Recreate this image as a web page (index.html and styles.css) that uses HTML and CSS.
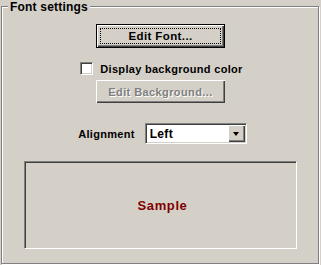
FILE: index.html
```html
<!DOCTYPE html>
<html lang="en">
<head>
    <meta charset="UTF-8">
    <title>Font settings</title>
    <link rel="stylesheet" href="styles.css">
</head>
<body>
    <div class="group">
        <span class="group-title">Font settings</span>

        <button class="btn btn-default"><span class="focus">Edit Font...</span></button>

        <label class="check-row">
            <span class="checkbox"></span>
            <span>Display background color</span>
        </label>

        <button class="btn btn-disabled" disabled>Edit Background...</button>

        <div class="align-row">
            <span class="align-label">Alignment</span>
            <div class="combo">
                <span class="combo-text">Left</span>
                <span class="combo-btn"><span class="arrow"></span></span>
            </div>
        </div>

        <div class="sample">Sample</div>
    </div>
</body>
</html>
```

FILE: styles.css
```css
body {
    margin: 0;
    width: 321px;
    height: 265px;
    background-color: #d4d0c8;
    font-family: "Liberation Sans", Arial, sans-serif;
    font-size: 11px;
    font-weight: bold;
    letter-spacing: 0.3px;
    color: #000;
}
.group {
    position: relative;
    box-sizing: border-box;
    margin: 6px 0 0 1px;
    width: 318px;
    height: 258px;
    border: 1px solid #808080;
    box-shadow: inset 1px 1px 0 #fff, 1px 1px 0 #fff;
    display: flex;
    flex-direction: column;
    align-items: center;
    padding-top: 17px;
}
.group-title {
    position: absolute;
    left: 6px;
    top: -6px;
    padding: 0 2px;
    background-color: #d4d0c8;
    font-size: 12px;
    line-height: 12px;
    letter-spacing: 0.2px;
}
.btn {
    box-sizing: border-box;
    width: 129px;
    font-family: inherit;
    font-size: 11px;
    font-weight: bold;
    letter-spacing: 0.4px;
    background-color: #d4d0c8;
    padding: 0;
    margin-left: 1px;
}
.btn-default {
    height: 24px;
    border: 1px solid #000;
    box-shadow: inset 1px 1px 0 #fff, inset -1px -1px 0 #404040, inset -2px -2px 0 #808080;
    display: flex;
}
.focus {
    flex: 1;
    margin: 3px;
    border: 1px dotted #000;
    line-height: 14px;
    text-align: center;
    font-size: 11.5px;
}
.check-row {
    display: flex;
    align-items: center;
    gap: 7px;
    margin-top: 14px;
    margin-left: 3px;
    height: 13px;
}
.checkbox {
    box-sizing: border-box;
    width: 13px;
    height: 13px;
    background-color: #fff;
    border: 1px solid;
    border-color: #808080 #fff #fff #808080;
    box-shadow: inset 1px 1px 0 #404040, inset -1px -1px 0 #d4d0c8;
}
.btn-disabled {
    height: 23px;
    margin-top: 5px;
    border: none;
    color: #808080;
    text-shadow: 1px 1px 0 #fff;
    box-shadow: inset 1px 1px 0 #fff, inset -1px -1px 0 #404040, inset -2px -2px 0 #808080;
}
.align-row {
    display: flex;
    align-items: center;
    gap: 10px;
    margin-top: 20px;
    margin-left: 5px;
}
.combo {
    box-sizing: border-box;
    width: 102px;
    height: 21px;
    background-color: #fff;
    border: 1px solid;
    border-color: #808080 #fff #fff #808080;
    box-shadow: inset 1px 1px 0 #404040, inset -1px -1px 0 #d4d0c8;
    display: flex;
    align-items: center;
    padding: 1px;
}
.combo-text {
    flex: 1;
    padding-left: 3px;
    font-size: 12px;
}
.combo-btn {
    box-sizing: border-box;
    width: 17px;
    height: 17px;
    background-color: #d4d0c8;
    box-shadow: inset 1px 1px 0 #fff, inset -1px -1px 0 #404040, inset -2px -2px 0 #808080;
    display: flex;
    align-items: center;
    justify-content: center;
}
.arrow {
    width: 0;
    height: 0;
    border-left: 3.5px solid transparent;
    border-right: 3.5px solid transparent;
    border-top: 4px solid #000;
    margin-right: 1px;
}
.sample {
    box-sizing: border-box;
    width: 273px;
    height: 88px;
    margin-top: 17px;
    padding-left: 5px;
    border: 1px solid;
    border-color: #808080 #fff #fff #808080;
    box-shadow: inset 1px 1px 0 #404040;
    display: flex;
    align-items: center;
    justify-content: center;
    color: #800000;
    font-size: 13px;
    letter-spacing: 0.6px;
}
```
